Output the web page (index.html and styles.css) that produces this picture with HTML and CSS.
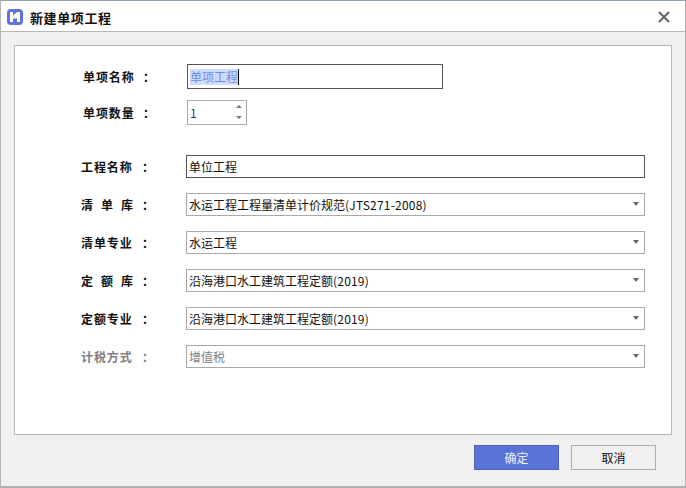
FILE: index.html
```html
<!DOCTYPE html>
<html lang="zh">
<head>
<meta charset="utf-8">
<title>新建单项工程</title>
<link rel="stylesheet" href="styles.css">
</head>
<body>
<div class="window">
  <header class="titlebar">
    <svg class="logo" width="16" height="16" viewBox="0 0 16 16"><rect width="16" height="16" rx="4" fill="#5b74e0"/><path d="M3 3h3v3.4L10 3h3v10h-3V9.6H6V13H3z" fill="#fff"/></svg>
    <h1 class="title">新建单项工程</h1>
    <svg class="close" width="12" height="12" viewBox="0 0 12 12"><path d="M1 1l10 10M11 1L1 11" stroke="#666" stroke-width="2" fill="none"/></svg>
  </header>
  <main class="body">
    <section class="panel">
      <div class="group-a">
        <div class="row">
          <label class="label"><span class="lname">单项名称</span><span>：</span></label>
          <div class="input focus name-input"><span class="selected">单项工程</span><i class="caret"></i></div>
        </div>
        <div class="row">
          <label class="label"><span class="lname">单项数量</span><span>：</span></label>
          <div class="input spin"><span class="num">1</span>
            <span class="arrows"><i class="up"></i><i class="down"></i></span>
          </div>
        </div>
      </div>
      <div class="group-b">
        <div class="row2">
          <label class="label"><span class="lname">工程名称</span><span>：</span></label>
          <div class="input focus wide"><span>单位工程</span></div>
        </div>
        <div class="row2">
          <label class="label"><span class="lname spread">清单库</span><span>：</span></label>
          <div class="input wide combo"><span>水运工程工程量清单计价规范<span class="lat">(JTS271-2008)</span></span><i class="drop"></i></div>
        </div>
        <div class="row2">
          <label class="label"><span class="lname">清单专业</span><span>：</span></label>
          <div class="input wide combo"><span>水运工程</span><i class="drop"></i></div>
        </div>
        <div class="row2">
          <label class="label"><span class="lname spread">定额库</span><span>：</span></label>
          <div class="input wide combo"><span>沿海港口水工建筑工程定额<span class="lat">(2019)</span></span><i class="drop"></i></div>
        </div>
        <div class="row2">
          <label class="label"><span class="lname">定额专业</span><span>：</span></label>
          <div class="input wide combo"><span>沿海港口水工建筑工程定额<span class="lat">(2019)</span></span><i class="drop"></i></div>
        </div>
        <div class="row2 disabled">
          <label class="label"><span class="lname">计税方式</span><span>：</span></label>
          <div class="input wide combo"><span>增值税</span><i class="drop"></i></div>
        </div>
      </div>
    </section>
    <footer class="actions">
      <button class="btn primary">确定</button>
      <button class="btn">取消</button>
    </footer>
  </main>
</div>
</body>
</html>
```
FILE: styles.css
```css
* { box-sizing: border-box; }
html, body { margin: 0; padding: 0; }
body { width: 686px; height: 488px; overflow: hidden; background: #fff; font: 12px "Noto Sans CJK SC", "Liberation Sans", sans-serif; color: #111; }
.window { width: 686px; height: 488px; display: flex; flex-direction: column; border: 1px solid #b4b4b4; border-top: 1px solid #92a2ad; border-bottom: 2px solid #b0b0b0; }
.titlebar { height: 31px; flex: none; display: flex; align-items: center; padding: 2px 15px 0 6px; background: #fff; border-bottom: 1px solid #b8b8b8; }
.logo { flex: none; }
.title { margin: 0 0 0 7px; font-size: 13px; font-weight: 700; letter-spacing: 0.6px; flex: 1; color: #111; }
.close { flex: none; }
.body { flex: 1; background: #f0f0f0; padding: 13px 13px 0; display: flex; flex-direction: column; }
.panel { height: 390px; flex: none; background: #fff; border: 1px solid #b8b8b8; }
.group-a { padding: 18px 0 0 68px; display: flex; flex-direction: column; gap: 11px; }
.row { display: flex; align-items: center; height: 25px; }
.row .label { width: 104px; }
.label { display: flex; font-weight: 700; font-size: 12px; color: #111; white-space: nowrap; }
.lname { width: 60px; letter-spacing: 0.9px; }
.row2 .lname { width: 61px; }
.lname.spread { letter-spacing: 8px; }
.input { height: 25px; background: #fff; border: 1px solid #a9a9a9; display: flex; align-items: center; padding: 0 2px; position: relative; }
.input.focus { border-color: #555; }
.name-input { width: 256px; }
.selected { background: #cfdcfd; color: #6e8de8; line-height: 16px; }
.caret { width: 1px; height: 16px; background: #000; }
.spin { width: 60px; }
.num { color: #1c3f6e; }
.arrows { position: absolute; right: 4px; top: 4px; display: flex; flex-direction: column; gap: 8px; }
.up, .down { display: block; width: 0; height: 0; border-left: 3px solid transparent; border-right: 3px solid transparent; }
.up { border-bottom: 3px solid #777; }
.down { border-top: 3px solid #777; }
.group-b { padding: 30px 0 0 66px; display: flex; flex-direction: column; gap: 15px; }
.row2 { display: flex; align-items: center; height: 23px; }
.row2 .label { width: 105px; }
.wide { width: 459px; height: 23px; }
.lat { letter-spacing: 0.2px; }
.drop { position: absolute; right: 5px; top: 8px; width: 0; height: 0; border-left: 3px solid transparent; border-right: 3px solid transparent; border-top: 4px solid #666; }
.disabled .label, .disabled .input span { color: #808080; }
.actions { display: flex; justify-content: flex-end; gap: 12px; padding: 10px 16px 0 0; }
.btn { width: 85px; height: 25px; padding: 0; font: inherit; color: #111; background: #f0f0f0; border: 1px solid #adadad; }
.primary { background: #5a73d6; border-color: #4c63c4; color: #f2f2ff; }
```
